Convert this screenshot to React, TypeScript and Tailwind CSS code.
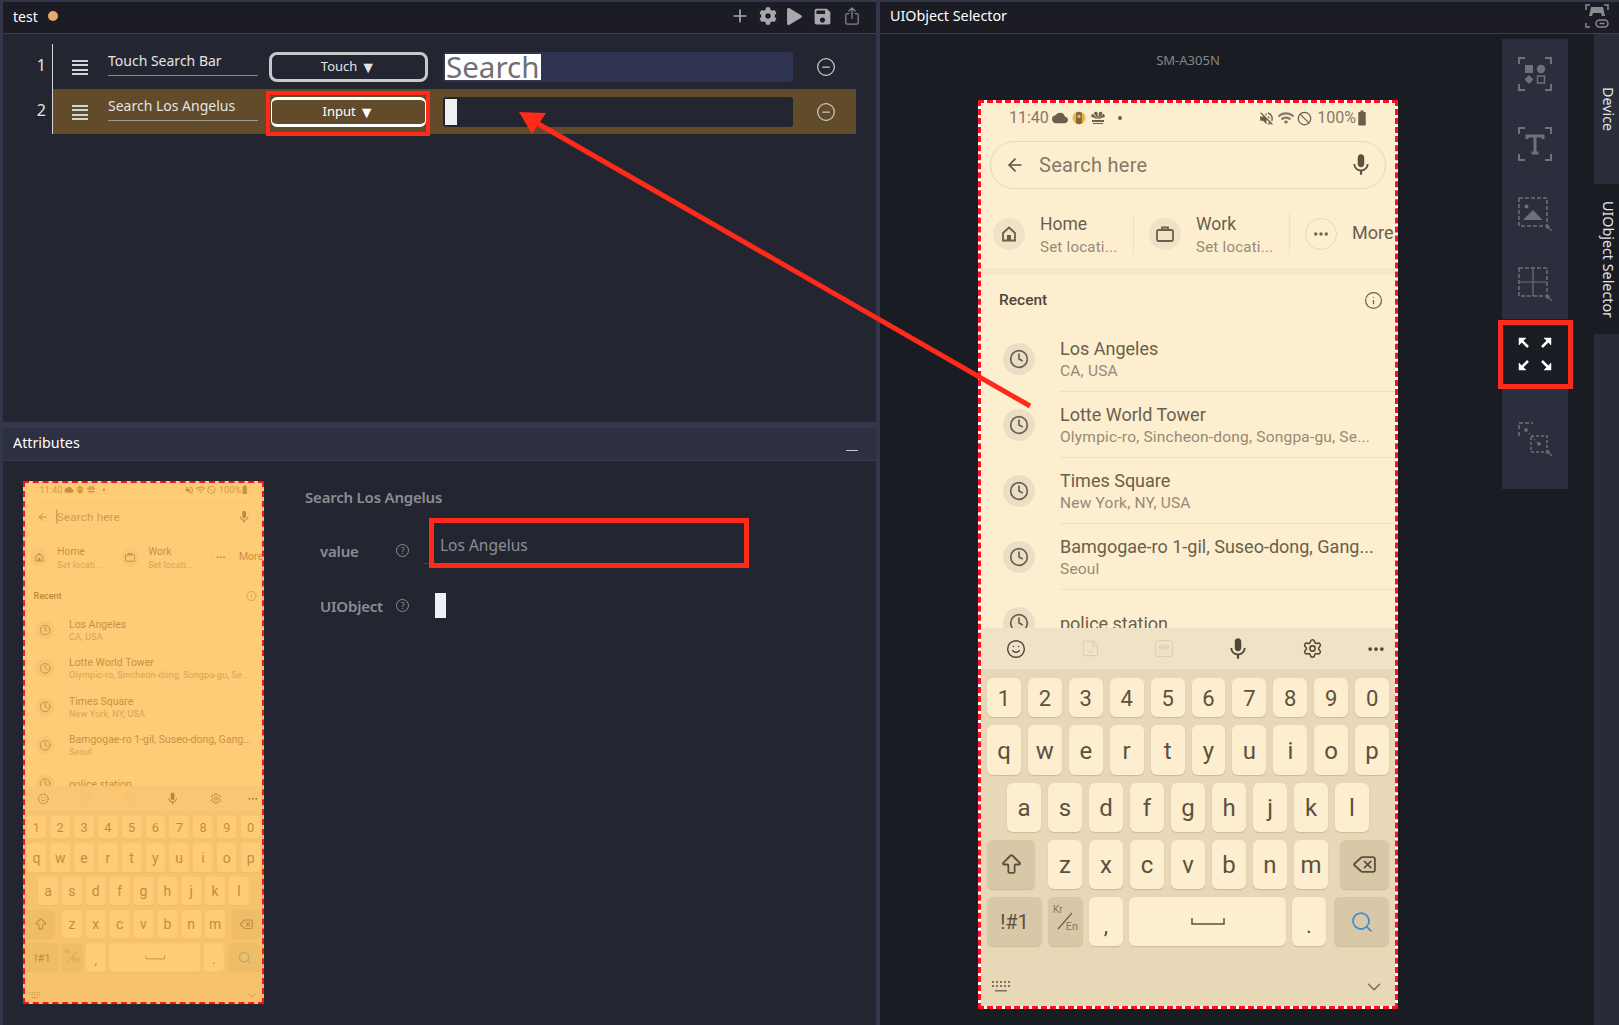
import React from 'react';
import { ArrowBigUp, ArrowLeft, Ban, ChevronDown, CircleMinus, Clock, Delete, Ellipsis, Info, Plus, Search, Settings, Smile, Sticker } from 'lucide-react';
import { FaCog, FaPlay } from 'react-icons/fa';
import { IoShareOutline } from 'react-icons/io5';
import { MdBatteryFull, MdCloud, MdMic, MdSave, MdVolumeOff, MdWifi } from 'react-icons/md';

const RECENT = [
  { title: 'Los Angeles', sub: 'CA, USA' },
  { title: 'Lotte World Tower', sub: 'Olympic-ro, Sincheon-dong, Songpa-gu, Se...' },
  { title: 'Times Square', sub: 'New York, NY, USA' },
  { title: 'Bamgogae-ro 1-gil, Suseo-dong, Gang...', sub: 'Seoul' },
];

const keyClass = 'flex items-center justify-center rounded-[6px] bg-[#fdeed0] shadow-[0_1px_1px_rgba(120,100,60,0.25)] text-[#5c5140]';
const darkKeyClass = 'flex items-center justify-center rounded-[6px] bg-[#d8c8a8] shadow-[0_1px_1px_rgba(120,100,60,0.25)] text-[#5c5140]';

function KeyRow({ keys, height, text }: { keys: string[]; height: string; text: string }) {
  return (
    <div className={`flex gap-[7px] ${height}`}>
      {keys.map((k) => (
        <div key={k} className={`${keyClass} w-[34px] pt-[2px] ${text}`}>{k}</div>
      ))}
    </div>
  );
}

function PhoneScreen({ caret }: { caret?: boolean }) {
  return (
    <div className="flex h-[903px] w-[414px] flex-col overflow-hidden bg-[#fdeed0] font-['Roboto',sans-serif] text-[#6a5f4b]">
      <div className="flex h-[30px] shrink-0 items-center pl-[28px] pr-[24px] text-[16px] text-[#85796a]">
        <span>11:40</span>
        <MdCloud size={16} className="ml-[3px] text-[#6a5f4b]" />
        <svg width="16" height="16" viewBox="0 0 16 16" className="ml-[3px]">
          <circle cx="8" cy="8" r="6.5" fill="#e8b64c" />
          <rect x="5" y="2" width="6" height="12" rx="2" fill="#85683a" />
          <rect x="6.5" y="5" width="3" height="3" fill="#e8b64c" />
        </svg>
        <svg width="16" height="14" viewBox="0 0 16 14" className="ml-[3px]" fill="#6a5f4b">
          <path d="M8 8 4 2.5a2 2 0 0 1 3.500-1zM8 8l1-6.500a2 2 0 0 1 3.500 1zM8 8 1.500 6a2 2 0 0 1 1.500-3zM8 8l6.500-2a2 2 0 0 0-1.500-3zM2 9h12v2H2zM3 12h10v1H3z" />
        </svg>
        <span className="ml-[12px] h-[4px] w-[4px] rounded-full bg-[#6a5f4b]" />
        <MdVolumeOff size={17} className="ml-auto text-[#6a5f4b]" />
        <MdWifi size={18} className="ml-[2px] text-[#85796a]" />
        <Ban size={15} strokeWidth={2} className="ml-[2px] text-[#6a5f4b]" />
        <span className="ml-[5px]">100%</span>
        <MdBatteryFull size={18} className="-ml-[3px] text-[#6a5f4b]" />
      </div>

      <div className="mx-[9px] mt-[8px] flex h-[48px] shrink-0 items-center rounded-full border border-[#e6d8b8] pl-[14px] pr-[11px]">
        <ArrowLeft size={20} strokeWidth={2} className="text-[#5c5140]" />
        <span className="relative ml-[14px] text-[20px] tracking-[0.3px] text-[#85796a]">
          {caret && <span className="absolute -left-[1px] top-[2px] h-[24px] w-[2px] bg-[#5a6a80]" />}
          Search here
        </span>
        <MdMic size={26} className="ml-auto text-[#5c5140]" />
      </div>

      <div className="flex h-[79px] shrink-0 items-center pl-[12px] pt-[10px]">
        <div className="flex h-[32px] w-[32px] items-center justify-center rounded-full bg-[#efe2c6]">
          <svg width="16" height="16" viewBox="0 0 16 16" fill="none" stroke="#6a5f4b" strokeWidth="1.800">
            <path d="M2 7v7.500h12V7L8 1.500z" />
            <rect x="6" y="9" width="4" height="5.500" fill="#6a5f4b" stroke="none" />
          </svg>
        </div>
        <div className="ml-[15px] w-[93px] pt-[4px]">
          <div className="text-[17.5px] leading-[23px]">Home</div>
          <div className="text-[15px] leading-[23px] tracking-[0.25px] text-[#958a76]">Set locati...</div>
        </div>
        <div className="h-[41px] w-px bg-[#eee0c4]" />
        <div className="ml-[15px] flex h-[32px] w-[32px] items-center justify-center rounded-full bg-[#efe2c6]">
          <svg width="18" height="16" viewBox="0 0 18 16" fill="none" stroke="#6a5f4b" strokeWidth="1.800">
            <rect x="1" y="4" width="16" height="11" rx="1.500" />
            <path d="M6 4V1.500h6V4" />
          </svg>
        </div>
        <div className="ml-[15px] w-[93px] pt-[4px]">
          <div className="text-[17.5px] leading-[23px]">Work</div>
          <div className="text-[15px] leading-[23px] tracking-[0.25px] text-[#958a76]">Set locati...</div>
        </div>
        <div className="h-[41px] w-px bg-[#eee0c4]" />
        <div className="ml-[15px] flex h-[32px] w-[32px] items-center justify-center rounded-full border border-[#e6d8b8]">
          <Ellipsis size={18} strokeWidth={2.5} />
        </div>
        <span className="ml-[15px] pb-[2px] text-[18px]">More</span>
      </div>

      <div className="h-[7px] shrink-0 bg-[#f7e8ca]" />

      <div className="flex h-[51px] shrink-0 items-center justify-between pl-[18px] pr-[12px]">
        <span className="text-[15.5px] font-medium text-[#4f4636]">Recent</span>
        <Info size={19} strokeWidth={1.5} />
      </div>

      <div className="h-[302px] shrink-0 overflow-hidden">
        {RECENT.map((r) => (
          <div key={r.title} className="flex h-[66px] items-center pl-[22px]">
            <div className="flex h-[32px] w-[32px] shrink-0 items-center justify-center rounded-full bg-[#eadfc4]">
              <Clock size={20} strokeWidth={2} />
            </div>
            <div className="ml-[25px] flex h-full flex-1 flex-col justify-center border-b border-[#eee0c4] pt-[2px]">
              <div className="text-[18px] leading-[22px]">{r.title}</div>
              <div className="text-[15.5px] leading-[22px] tracking-[0.2px] text-[#958a76]">{r.sub}</div>
            </div>
          </div>
        ))}
        <div className="flex h-[66px] items-center pl-[22px]">
          <div className="flex h-[32px] w-[32px] shrink-0 items-center justify-center rounded-full bg-[#eadfc4]">
            <Clock size={20} strokeWidth={2} />
          </div>
          <div className="ml-[25px] text-[18px]">police station</div>
        </div>
      </div>

      <div className="flex flex-1 flex-col bg-[#e8d8b7]">
        <div className="flex h-[41px] shrink-0 items-center bg-[#f0e2c6] text-[#4f4636]">
          <div className="-ml-[2px] flex w-[74px] shrink-0 justify-center"><Smile size={20} strokeWidth={1.75} /></div>
          <div className="flex w-[74px] shrink-0 justify-center"><Sticker size={19} strokeWidth={1.5} className="text-[#ddcfb2]" /></div>
          <div className="flex w-[74px] shrink-0 justify-center">
            <div className="flex h-[17px] w-[18px] items-center justify-center rounded-[3px] border border-[#ddcfb2] text-[7px] font-bold text-[#ddcfb2]">GIF</div>
          </div>
          <div className="flex w-[74px] shrink-0 justify-center"><MdMic size={26} /></div>
          <div className="flex w-[74px] shrink-0 justify-center"><Settings size={21} strokeWidth={1.75} /></div>
          <div className="flex w-[54px] shrink-0 justify-center"><Ellipsis size={20} strokeWidth={2.5} /></div>
        </div>

        <div className="flex flex-col gap-[8px] px-[6px] pt-[9px]">
          <KeyRow keys={['1', '2', '3', '4', '5', '6', '7', '8', '9', '0']} height="h-[39px]" text="text-[22px]" />
          <KeyRow keys={['q', 'w', 'e', 'r', 't', 'y', 'u', 'i', 'o', 'p']} height="h-[50px]" text="text-[24px]" />
          <div className="flex h-[49px] justify-center gap-[7px]">
            {['a', 's', 'd', 'f', 'g', 'h', 'j', 'k', 'l'].map((k) => (
              <div key={k} className={`${keyClass} w-[34px] text-[24px]`}>{k}</div>
            ))}
          </div>
          <div className="flex h-[49px]">
            <div className={`${darkKeyClass} w-[48px]`}><ArrowBigUp size={25} strokeWidth={1.75} /></div>
            <div className="ml-[13px] flex gap-[7px]">
              {['z', 'x', 'c', 'v', 'b', 'n', 'm'].map((k) => (
                <div key={k} className={`${keyClass} w-[34px] text-[24px]`}>{k}</div>
              ))}
            </div>
            <div className={`${darkKeyClass} ml-auto w-[49px]`}><Delete size={25} strokeWidth={1.75} /></div>
          </div>
          <div className="flex h-[49px] gap-[6px]">
            <div className={`${darkKeyClass} w-[55px] text-[20px]`}>!#1</div>
            <div className={`${darkKeyClass} relative w-[35px]`}>
              <span className="absolute left-[5px] top-[5px] text-[10px] text-[#85796a]">Kr</span>
              <svg width="35" height="49" viewBox="0 0 35 49"><path d="M10 32 24 16" stroke="#6a5f4b" strokeWidth="1.2" /></svg>
              <span className="absolute bottom-[11px] right-[5px] text-[11px] text-[#85796a]">En</span>
            </div>
            <div className={`${keyClass} w-[34px] pt-[8px] text-[22px]`}>,</div>
            <div className={`${keyClass} w-[157px]`}>
              <svg width="34" height="10" viewBox="0 0 34 10"><path d="M1 1v6h32V1" fill="none" stroke="#5c5140" strokeWidth="1.5" /></svg>
            </div>
            <div className={`${keyClass} w-[34px] pt-[8px] text-[22px]`}>.</div>
            <div className={`${darkKeyClass} ml-[2px] flex-1`}><Search size={24} strokeWidth={1.75} className="text-[#3f8fd0]" /></div>
          </div>
        </div>

        <div className="mt-[30px] flex items-center justify-between pl-[11px] pr-[10px]">
          <svg width="20" height="12" viewBox="0 0 20 12" fill="#7d7260">
            <path d="M0 0h2v2H0zM4 0h2v2H4zM8 0h2v2H8zM12 0h2v2h-2zM16 0h2v2h-2zM0 4h2v2H0zM4 4h2v2H4zM8 4h2v2H8zM12 4h2v2h-2zM16 4h2v2h-2zM3 9h12v1.500H3z" />
          </svg>
          <ChevronDown size={22} strokeWidth={1.75} className="text-[#7d7260]" />
        </div>
      </div>
    </div>
  );
}

function Hamburger() {
  return (
    <div className="flex h-[15px] w-[16px] flex-col justify-between">
      <div className="h-[2px] bg-[#d4d4d8]" />
      <div className="h-[2px] bg-[#d4d4d8]" />
      <div className="h-[2px] bg-[#d4d4d8]" />
      <div className="h-[2px] bg-[#d4d4d8]" />
    </div>
  );
}

function CornerFrame() {
  return <path d="M1 7V1h6M27 1h6v6M1 27v6h6M27 33h6v-6" fill="none" stroke="#6f7178" strokeWidth="2" />;
}

function ToolIcon({ kind }: { kind: number }) {
  if (kind === 0) {
    return (
      <svg width="34" height="34" viewBox="0 0 34 34">
        <CornerFrame />
        <rect x="7" y="8" width="8" height="8" fill="#6f7178" />
        <circle cx="23" cy="12" r="4.200" fill="#6f7178" />
        <path d="M11 18l4.500 4.500L11 27l-4.500-4.500z" fill="#6f7178" />
        <rect x="19.500" y="19" width="7" height="7" fill="none" stroke="#6f7178" strokeWidth="1.500" />
      </svg>
    );
  }
  if (kind === 1) {
    return (
      <svg width="34" height="34" viewBox="0 0 34 34">
        <CornerFrame />
        <path d="M9 12V9h16v3M17 9v17M13.500 26h7" fill="none" stroke="#6f7178" strokeWidth="3" />
      </svg>
    );
  }
  if (kind === 2) {
    return (
      <svg width="34" height="34" viewBox="0 0 34 34">
        <rect x="1" y="1" width="28" height="28" fill="none" stroke="#6f7178" strokeWidth="1.500" strokeDasharray="4 2" />
        <circle cx="8.500" cy="9.500" r="2" fill="#6f7178" />
        <path d="M5 23l10-10 9.500 10z" fill="#6f7178" />
        <path d="M34 34l-5-5M29 32v-3h3" fill="none" stroke="#6f7178" strokeWidth="1.200" />
      </svg>
    );
  }
  if (kind === 3) {
    return (
      <svg width="34" height="34" viewBox="0 0 34 34">
        <rect x="1" y="1" width="28" height="28" fill="none" stroke="#6f7178" strokeWidth="1.500" strokeDasharray="4 2" />
        <path d="M15 1v28M1 15h28" stroke="#6f7178" strokeWidth="1.200" />
        <path d="M34 34l-5-5M29 32v-3h3" fill="none" stroke="#6f7178" strokeWidth="1.200" />
      </svg>
    );
  }
  if (kind === 4) {
    return (
      <svg width="34" height="34" viewBox="0 0 34 34" fill="#fff" stroke="#fff" strokeWidth="2.500">
        <path d="M1 1h7L1 8z" strokeWidth="0.500" />
        <path d="M3 3l7 7" />
        <path d="M33 1h-7l7 7z" strokeWidth="0.500" />
        <path d="M31 3l-7 7" />
        <path d="M1 33h7l-7-7z" strokeWidth="0.500" />
        <path d="M3 31l7-7" />
        <path d="M33 33h-7l7-7z" strokeWidth="0.500" />
        <path d="M31 31l-7-7" />
      </svg>
    );
  }
  return (
    <svg width="34" height="34" viewBox="0 0 34 34">
      <path d="M1 7V1h14M1 10v5" fill="none" stroke="#6f7178" strokeWidth="1.500" strokeDasharray="4 2" />
      <rect x="13" y="14" width="16" height="16" fill="none" stroke="#6f7178" strokeWidth="1.500" strokeDasharray="3 2" />
      <circle cx="8" cy="8" r="1.800" fill="#6f7178" />
      <circle cx="21" cy="22" r="1.800" fill="#6f7178" />
      <path d="M8 8l13 14" stroke="#6f7178" strokeWidth="1" strokeDasharray="2 2" />
      <path d="M34 34l-5-5M29 32v-3h3" fill="none" stroke="#6f7178" strokeWidth="1.200" />
    </svg>
  );
}

export default function App() {
  return (
    <div className="relative flex h-[1025px] w-[1619px] overflow-hidden bg-[#1a1c23] font-['Noto_Sans',sans-serif] text-[14px] text-[#e4e4e7]">
      <div className="flex w-[880px] shrink-0 flex-col border-t-[2px] border-r-[4px] border-l-[3px] border-[#333648]">
        <div className="flex h-[32px] shrink-0 items-center border-b border-[#3a3d4d] bg-[#1b1c24] pb-[3px] pl-[10px] pr-[14px]">
          <span className="text-white">test</span>
          <span className="ml-[10px] h-[10px] w-[10px] rounded-full bg-[#e8a86d]" />
          <div className="ml-auto flex items-center gap-[9px] text-[#a8a8ae]">
            <Plus size={20} strokeWidth={2} />
            <FaCog size={18} />
            <FaPlay size={17} />
            <MdSave size={21} />
            <IoShareOutline size={20} className="text-[#85858c]" />
          </div>
        </div>

        <div className="flex-1 bg-[#232530] pt-[10px]">
          <div className="flex h-[45px]">
            <div className="w-[49px] pr-[6px] pt-[10px] text-right text-[16px] leading-[22px]">1</div>
            <div className="flex w-[804px] border-l border-[#d4d4d8]">
              <div className="ml-[19px] mt-[16px]"><Hamburger /></div>
              <div className="ml-[20px] mt-[6px] h-[26px] w-[150px] border-b border-[#8a8a90] leading-[22px]">Touch Search Bar</div>
              <div className="ml-[8px] flex w-[165px] justify-center pt-[8px]">
                <div className="flex h-[30px] w-[159px] items-center justify-center gap-[3px] rounded-[8px] border-[3px] border-[#c8c8c8] text-[13px]">Touch <span className="text-[16px] leading-none">▼</span></div>
              </div>
              <div className="ml-[12px] mt-[8px] flex h-[30px] w-[350px] items-center rounded-[3px] bg-[#2f3452] pl-[2px]">
                <div className="h-[26px] w-[96px] bg-white pl-[1px] text-[29.5px] leading-[26px] text-[#6f6f75]">Search</div>
              </div>
              <CircleMinus size={20} strokeWidth={1.5} className="ml-[23px] mt-[13px] text-[#c8c8c8]" />
            </div>
          </div>
          <div className="flex h-[45px]">
            <div className="w-[49px] pr-[6px] pt-[10px] text-right text-[16px] leading-[22px]">2</div>
            <div className="flex w-[804px] border-l border-[#d4d4d8] bg-[#624b2a]">
              <div className="ml-[19px] mt-[16px]"><Hamburger /></div>
              <div className="ml-[20px] mt-[6px] h-[26px] w-[150px] border-b border-[#a09a8c] leading-[22px]">Search Los Angelus</div>
              <div className="ml-[8px] flex w-[165px] justify-center pt-[8px]">
                <div className="flex h-[30px] w-[155px] items-center justify-center gap-[3px] rounded-[6px] border-x border-y-[3px] border-white text-[13px] text-white">Input <span className="text-[16px] leading-none">▼</span></div>
              </div>
              <div className="ml-[12px] mt-[8px] flex h-[30px] w-[350px] items-center rounded-[3px] bg-[#232530] pl-[2px]">
                <div className="h-[26px] w-[12px] bg-[#eef0f4]" />
              </div>
              <CircleMinus size={20} strokeWidth={1.5} className="ml-[23px] mt-[13px] text-[#c8c8c8]" />
            </div>
          </div>
        </div>

        <div className="h-[6px] shrink-0 bg-[#353849]" />

        <div className="flex h-[33px] shrink-0 items-center justify-between border-b border-[#3a3d4d] bg-[#2d3040] pb-[3px] pl-[10px] pr-[18px]">
          <span className="text-[14.3px] text-white">Attributes</span>
          <div className="mt-[16px] h-[1.5px] w-[12px] bg-[#c8c8c8]" />
        </div>

        <div className="flex h-[564px] shrink-0 bg-[#232530] pl-[20px] pt-[20px]">
          <div className="relative h-[523px] w-[241px] shrink-0 overflow-hidden bg-white">
            <div className="h-[903px] w-[414px] origin-top-left scale-[0.5821]">
              <PhoneScreen caret />
            </div>
            <div className="absolute inset-0 bg-[#ffb43c]/60" />
            <div className="absolute inset-0 border-[2.5px] border-dashed border-[#ff1020]" />
          </div>
          <div className="ml-[41px] flex flex-1 flex-col pt-[6px] font-semibold tracking-[-0.2px] text-[#8c8d94]">
            <div className="text-[15px] leading-[20px]">Search Los Angelus</div>
            <div className="ml-[15px] mt-[21px] flex">
              <div className="w-[75px] pt-[13px] text-[15px] leading-[20px]">value</div>
              <div className="ml-[1px] pt-[16px]"><span className="flex h-[13px] w-[13px] items-center justify-center rounded-full border border-[#8c8d94] text-[9px] font-normal">?</span></div>
              <div className="ml-[14px] flex h-[36px] w-[320px] items-center border-b border-[#3a4060] pl-[17px] pt-[1px] text-[15.5px] font-normal tracking-normal">Los Angelus</div>
            </div>
            <div className="ml-[15px] mt-[29px] flex items-center">
              <div className="w-[75px] text-[15px] leading-[20px]">UIObject</div>
              <div className="ml-[1px]"><span className="flex h-[13px] w-[13px] items-center justify-center rounded-full border border-[#8c8d94] text-[9px] font-normal">?</span></div>
              <div className="ml-[26px] h-[25px] w-[11px] bg-[#eef0f4]" />
            </div>
          </div>
        </div>
      </div>

      <div className="flex flex-1 flex-col border-t-[2px] border-[#333648]">
        <div className="flex h-[32px] shrink-0 items-center justify-between border-b border-[#3a3d4d] bg-[#1b1c24] pb-[3px] pl-[10px] pr-[10px]">
          <span className="text-[14.3px] text-white">UIObject Selector</span>
          <svg width="24" height="24" viewBox="0 0 24 24" fill="none" stroke="#8a8b90">
            <path d="M1 6V1h4M19 1h4v5M1 19v4h4" strokeWidth="1.500" />
            <path d="M6 3h12l2 9h-3l-1-3H8l-1 3H4z" fill="#8a8b90" stroke="none" />
            <rect x="11" y="16" width="12" height="7" rx="3.500" strokeWidth="1.500" />
            <path d="M14.500 19.500h5" strokeWidth="1.500" />
          </svg>
        </div>

        <div className="flex flex-1">
          <div className="ml-[98px] flex w-[420px] flex-col pt-[16px]">
            <div className="h-[20px] text-center text-[13px] leading-[20px] text-[#85868c]">SM-A305N</div>
            <div className="mt-[30px] h-[909px] w-[420px] border-[3px] border-dashed border-[#ff1020] bg-white">
              <PhoneScreen />
            </div>
          </div>

          <div className="ml-[104px] mt-[5px] flex h-[450px] w-[66px] flex-col bg-[#2b2f3d]">
            {[0, 1, 2, 3, 4].map((kind) => (
              <div key={kind} className={`flex h-[70px] items-center justify-center ${kind === 4 ? 'bg-[#1a1c23]' : ''}`}>
                <ToolIcon kind={kind} />
              </div>
            ))}
            <div className="flex flex-1 items-center justify-center"><ToolIcon kind={5} /></div>
          </div>

          <div className="ml-[26px] flex w-[25px] flex-col">
            <div className="flex h-[150px] items-center justify-center bg-[#2a2d3a] pl-[3px] text-[14.3px] [writing-mode:vertical-rl]">Device</div>
            <div className="flex h-[150px] items-center justify-center pl-[3px] text-[14.3px] [writing-mode:vertical-rl]">UIObject Selector</div>
            <div className="flex-1 bg-[#2a2b38]" />
          </div>
        </div>
      </div>

      {/* annotations drawn on top of the screenshot */}
      <div className="absolute left-[266px] top-[91px] h-[45px] w-[164px] border-[4px] border-[#ff2a1a]" />
      <div className="absolute left-[429px] top-[518px] h-[50px] w-[320px] border-[5px] border-[#ff2a1a]" />
      <div className="absolute left-[1498px] top-[320px] h-[69px] w-[75px] border-[5px] border-[#ff2a1a]" />
      <svg className="pointer-events-none absolute inset-0" width="1619" height="1025">
        <path d="M1030 406 535 122" stroke="#ff2a1a" strokeWidth="5" />
        <path d="M519 112 546 113 532 134z" fill="#ff2a1a" />
      </svg>
    </div>
  );
}
